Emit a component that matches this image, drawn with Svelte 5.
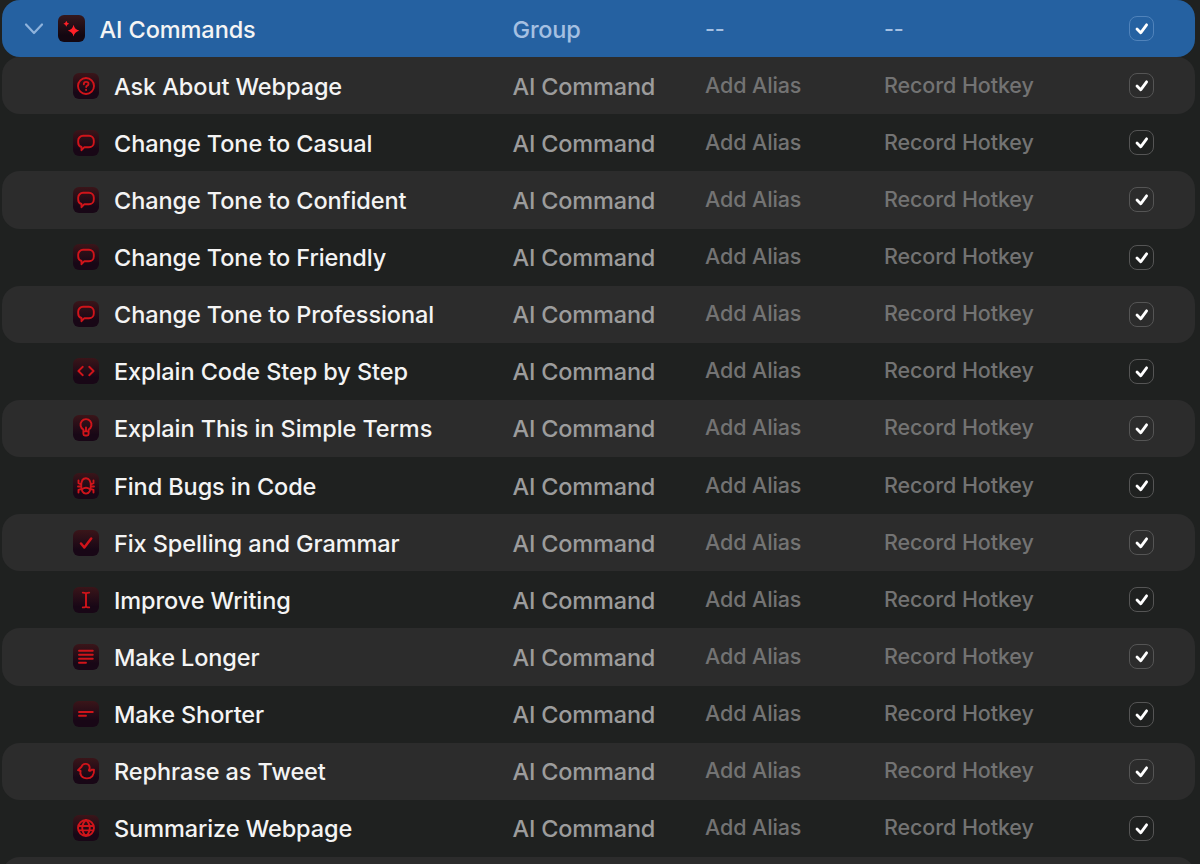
<script lang="ts">
  type Icon =
    | 'question'
    | 'bubble'
    | 'code'
    | 'bulb'
    | 'bug'
    | 'check'
    | 'cursor'
    | 'long'
    | 'short'
    | 'bird'
    | 'globe';

  interface Command {
    name: string;
    icon: Icon;
    enabled: boolean;
  }

  let commands = $state<Command[]>([
    { name: 'Ask About Webpage', icon: 'question', enabled: true },
    { name: 'Change Tone to Casual', icon: 'bubble', enabled: true },
    { name: 'Change Tone to Confident', icon: 'bubble', enabled: true },
    { name: 'Change Tone to Friendly', icon: 'bubble', enabled: true },
    { name: 'Change Tone to Professional', icon: 'bubble', enabled: true },
    { name: 'Explain Code Step by Step', icon: 'code', enabled: true },
    { name: 'Explain This in Simple Terms', icon: 'bulb', enabled: true },
    { name: 'Find Bugs in Code', icon: 'bug', enabled: true },
    { name: 'Fix Spelling and Grammar', icon: 'check', enabled: true },
    { name: 'Improve Writing', icon: 'cursor', enabled: true },
    { name: 'Make Longer', icon: 'long', enabled: true },
    { name: 'Make Shorter', icon: 'short', enabled: true },
    { name: 'Rephrase as Tweet', icon: 'bird', enabled: true },
    { name: 'Summarize Webpage', icon: 'globe', enabled: true }
  ]);

  let groupEnabled = $state(true);

  // stroked outlines on a 26x26 tile
  const outlines: Record<Icon, string> = {
    question:
      'M13 5a8 8 0 1 0 0 16a8 8 0 1 0 0-16zM10.8 11.2c0-3.2 4.7-3 4.7-.3c0 1.8-2.3 1.7-2.3 3.1M13.1 16.8v.2',
    bubble:
      'M10 5.8h6a4.8 4.8 0 0 1 4.8 4.8v1.8a4.8 4.8 0 0 1-4.8 4.8h-4.6l-2.9 3v-3.2a4.8 4.8 0 0 1-3.3-4.600v-1.800a4.800 4.800 0 0 1 4.800-4.800z',
    code: 'M9.8 8.8L5.4 13l4.4 4.2M16.2 8.8l4.4 4.2l-4.4 4.2',
    bulb: 'M10.4 16.4v-1.9a5.500 5.500 0 1 1 5.200 0v1.900zM10.4 16.400v2.600q0 1.500 1.500 1.500h2.200q1.500 0 1.500-1.500v-2.600M13 12.500v3',
    bug: 'M13 5.2c-3.3 0-4.8 3.3-4.8 7.400s1.500 8 4.800 8s4.800-3.900 4.800-8s-1.500-7.400-4.800-7.400zM9 16.200q4-2.800 8 0M5.500 7.500v2.700l2.700 1.300M20.500 7.500v2.700l-2.700 1.300M5 13.500h3M21 13.500h-3M5.500 19.500v-2.700l3-.8M20.500 19.500v-2.700l-3-.8',
    check: 'M8 13.5l3.300 4L18.200 8.500',
    cursor: 'M9.8 5.6q3.2 0 3.2 1.5q0-1.500 3.200-1.500M13 7v12M9.800 20.400q3.200 0 3.200-1.500q0 1.500 3.200 1.500',
    long: 'M6 6.8h13.800M6 10.800h13.800M6 14.800h13.800M6 18.800h7',
    short: 'M6 11h13.800M6 14.800h7',
    bird: 'M5 12.200l3.500-3.400a4.200 4.200 0 0 1 8.200 1.200c0 1-.8 1.600-.8 2.300c0 .9 1.600.9 2.500-.6h2.600c.5 5.500-2.500 8.700-7 8.700c-5.200 0-7.600-4-6.400-7.400z',
    globe:
      'M13 5a8 8 0 1 0 0 16a8 8 0 1 0 0-16zM13 5c-5 4.500-5 11.500 0 16M13 5c5 4.500 5 11.500 0 16M5.500 11h15M5.500 15.400h15'
  };
</script>

{#snippet checkbox(on: boolean, toggle: () => void, label: string)}
  <button class="checkbox" role="checkbox" aria-checked={on} aria-label={label} onclick={toggle}>
    {#if on}
      <svg viewBox="0 0 24 24" width="24" height="24" aria-hidden="true">
        <path d="M7 12l3.700 3.800L16.600 7.800" />
      </svg>
    {/if}
  </button>
{/snippet}

<main>
  <div class="row group">
    <div class="title">
      <svg class="chevron" viewBox="0 0 20 14" width="20" height="14" aria-hidden="true">
        <path d="M2 2.500l8 8.500l8-8.500" />
      </svg>
      <svg class="tile" viewBox="0 0 26 26" width="27" height="27" aria-hidden="true">
        <path
          class="spark"
          d="M15 9.500q1 4.700 5.500 5.600q-4.500.9-5.500 5.600q-1-4.700-5.500-5.600q4.500-.9 5.500-5.600zM8 5.500q.5 2.400 2.800 2.900q-2.300.5-2.800 2.900q-.5-2.400-2.800-2.900q2.300-.5 2.800-2.900z"
        />
      </svg>
      <span class="name">AI Commands</span>
    </div>
    <span class="kind">Group</span>
    <span class="field">--</span>
    <span class="field">--</span>
    {@render checkbox(groupEnabled, () => (groupEnabled = !groupEnabled), 'AI Commands')}
  </div>

  {#each commands as command (command.name)}
    <div class="row">
      <div class="title">
        <svg class="tile" viewBox="0 0 26 26" width="26" height="26" aria-hidden="true">
          <path class="outline {command.icon}" d={outlines[command.icon]} />
        </svg>
        <span class="name">{command.name}</span>
      </div>
      <span class="kind">AI Command</span>
      <span class="field">Add Alias</span>
      <span class="field">Record Hotkey</span>
      {@render checkbox(command.enabled, () => (command.enabled = !command.enabled), command.name)}
    </div>
  {/each}
  <div class="row"></div>
</main>

<style>
  :global(body) {
    margin: 0;
    background: #1f2120;
  }
  main {
    height: 864px;
    box-sizing: border-box;
    padding: 0 5px 0 2px;
    overflow: hidden;
    background: #1f2120;
    font-family: Inter, 'Liberation Sans', sans-serif;
    font-size: 23.5px;
    font-weight: 500;
    letter-spacing: -0.14px;
  }
  .row {
    display: grid;
    grid-template-columns: 510.5px 192.5px 179px 1fr 25px;
    align-items: center;
    height: 57.14px;
    box-sizing: border-box;
    padding-right: 41.5px;
    border-radius: 18px;
    color: #9c9c9c;
    white-space: nowrap;
  }
  .row:nth-child(even) {
    background: #2c2c2c;
  }
  .group {
    background: #2561a1;
    color: #a5c0e2;
  }
  .title {
    display: flex;
    align-items: center;
    padding-left: 70.5px;
  }
  .group .title {
    padding-left: 22px;
  }
  .chevron {
    margin-right: 14px;
    fill: none;
    stroke: #8fb3dc;
    stroke-width: 2.2;
    stroke-linecap: round;
    stroke-linejoin: round;
  }
  .tile {
    flex: none;
    margin-right: 15.5px;
    border-radius: 6px;
    background: linear-gradient(#3a1519, #180716 75%);
  }
  .group .tile {
    margin-right: 14.5px;
    background: linear-gradient(#35181d, #130711 75%);
  }
  .outline {
    fill: none;
    stroke: #d0141a;
    stroke-width: 1.9;
    stroke-linecap: round;
    stroke-linejoin: round;
  }
  .check {
    stroke-width: 2.5;
  }
  .spark {
    fill: #ff2028;
  }
  .name {
    padding-top: 1px;
    color: #f4f4f4;
    letter-spacing: -0.09px;
  }
  .kind {
    padding-top: 1px;
    letter-spacing: -0.18px;
  }
  .field {
    padding-bottom: 2px;
    font-size: 21.5px;
    letter-spacing: -0.1px;
    color: #737373;
  }
  .group .field {
    padding-bottom: 0;
    color: #a5c0e2;
  }
  .checkbox {
    width: 25px;
    height: 25px;
    box-sizing: border-box;
    padding: 0;
    border: 1.5px solid #555;
    border-radius: 8px;
    background: none;
    cursor: pointer;
  }
  .group .checkbox {
    border-color: #5083bb;
  }
  .checkbox svg {
    display: block;
    fill: none;
    stroke: #fff;
    stroke-width: 2.8;
    stroke-linecap: round;
    stroke-linejoin: round;
  }
</style>
